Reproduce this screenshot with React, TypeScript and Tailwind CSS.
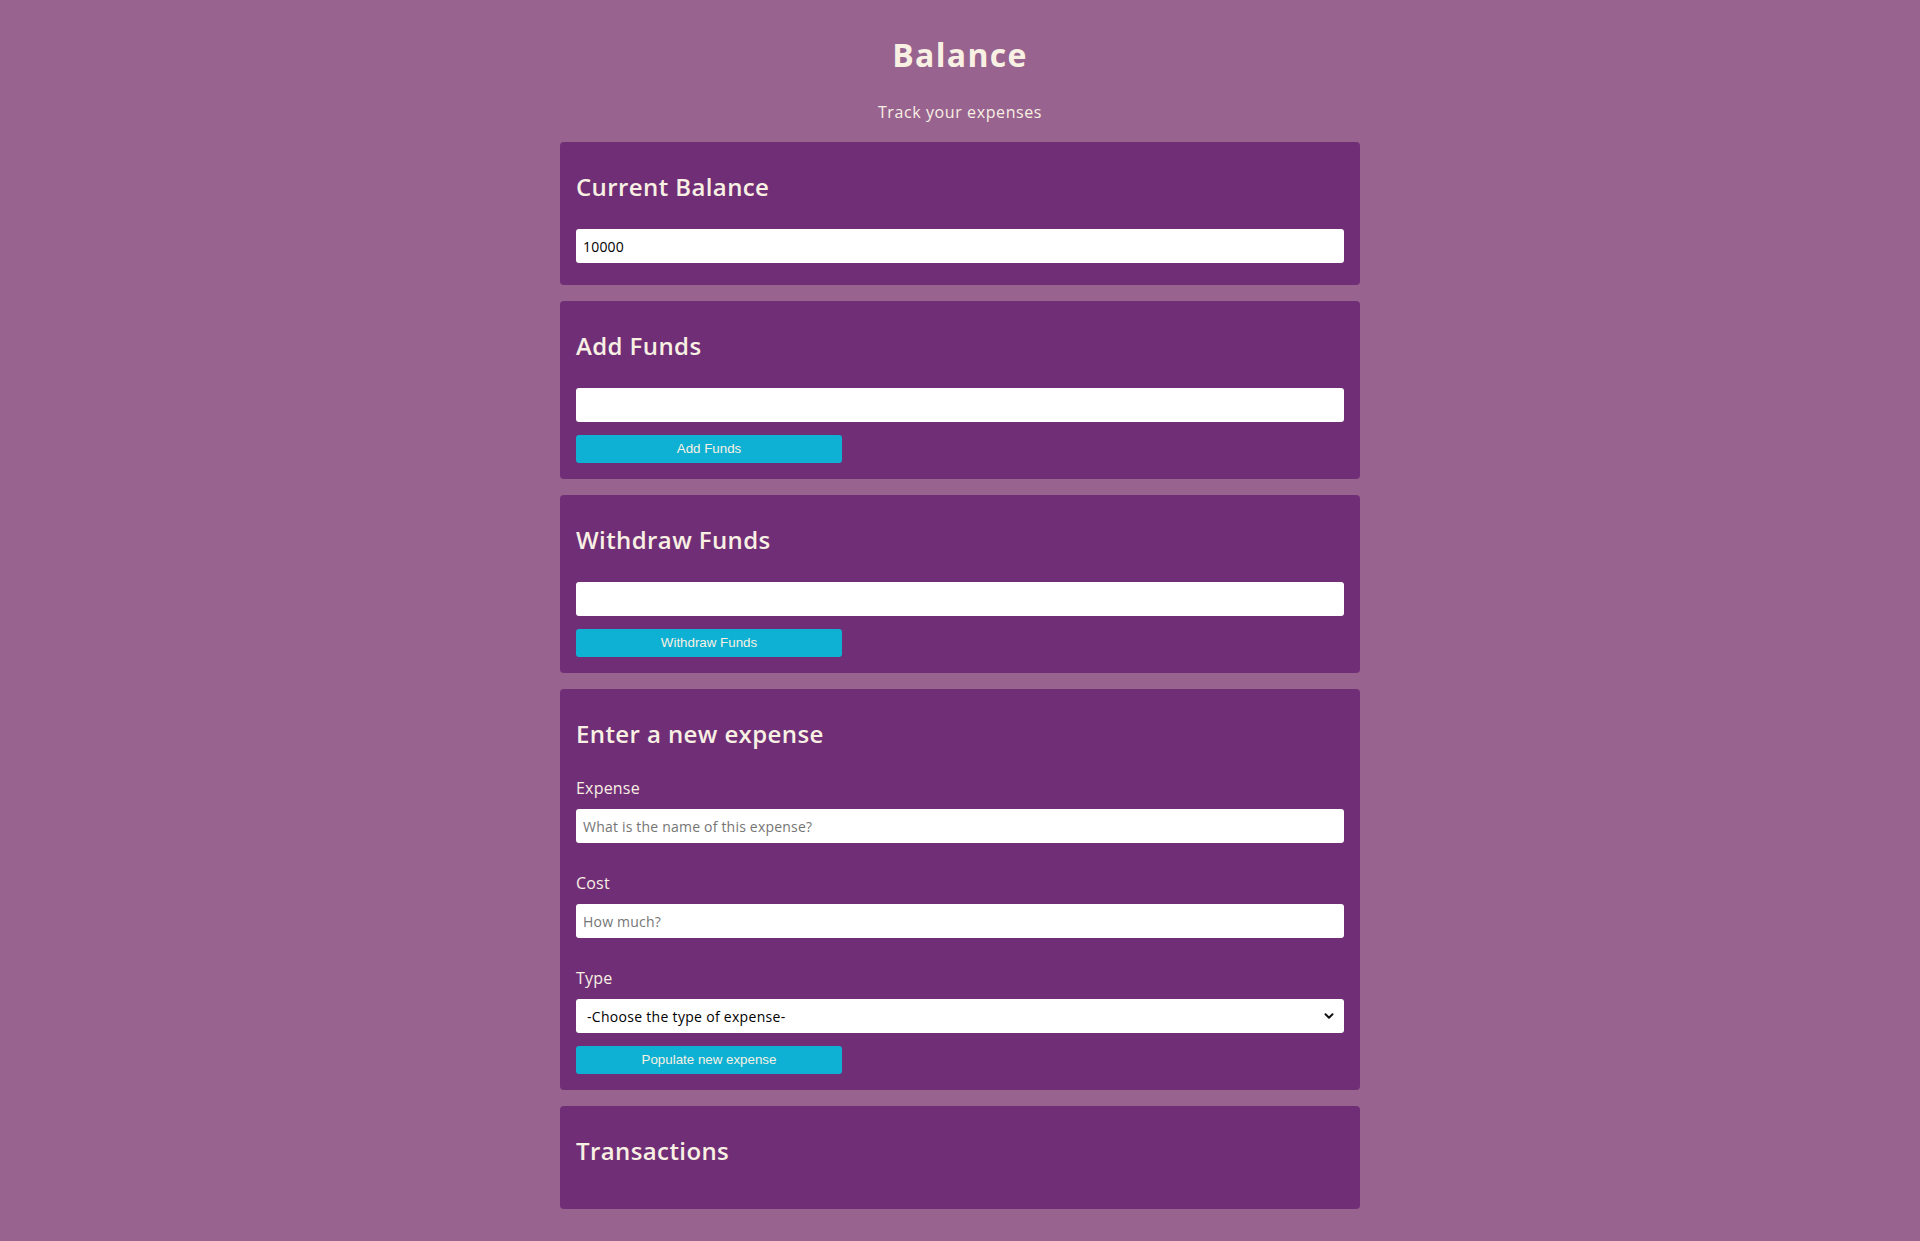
import React from "react";

function Card({ title, children, pb = "pb-4" }: { title: string; children?: React.ReactNode; pb?: string }) {
  return (
    <section className={`bg-[#702e77] rounded-[4px] px-4 pt-[27px] ${pb}`}>
      <h2 className="text-[24px] leading-[36px] font-semibold tracking-[0.4px] text-[#f8f0e3]">{title}</h2>
      {children}
    </section>
  );
}

function TextInput({ value, placeholder }: { value?: string; placeholder?: string }) {
  return (
    <input
      type="text"
      defaultValue={value}
      placeholder={placeholder}
      className="block w-full h-[34px] bg-white rounded-[3px] px-[7px] text-[14px] tracking-[0.2px] text-black placeholder:text-[#757575] outline-none"
    />
  );
}

function Btn({ children }: { children: React.ReactNode }) {
  return (
    <button className="block w-[266px] h-[28px] bg-[#0eb1d3] rounded-[3px] text-[13.33px] text-[#f8f0e3] font-['Liberation_Sans',Arial,sans-serif]">
      {children}
    </button>
  );
}

function Label({ children }: { children: React.ReactNode }) {
  return <label className="block text-[16px] leading-[24px] font-medium tracking-[0.2px] text-[#f8f0e3]">{children}</label>;
}

export default function App() {
  return (
    <div className="min-h-[1241px] bg-[#98638f] font-['Open_Sans',sans-serif] flex flex-col items-center pb-8">
      <h1 className="mt-[31px] text-[32px] leading-[48px] font-bold tracking-[1.3px] text-[#f8f0e3]">Balance</h1>
      <p className="mt-[21px] text-[16px] leading-[24px] tracking-[0.6px] text-[#f8f0e3]">Track your expenses</p>
      <main className="mt-[18px] w-[800px] flex flex-col gap-4">
        <Card title="Current Balance" pb="pb-[22px]">
          <div className="mt-[24px]">
            <TextInput value="10000" />
          </div>
        </Card>
        <Card title="Add Funds">
          <div className="mt-[24px]">
            <TextInput />
          </div>
          <div className="mt-[13px]">
            <Btn>Add Funds</Btn>
          </div>
        </Card>
        <Card title="Withdraw Funds">
          <div className="mt-[24px]">
            <TextInput />
          </div>
          <div className="mt-[13px]">
            <Btn>Withdraw Funds</Btn>
          </div>
        </Card>
        <Card title="Enter a new expense">
          <div className="mt-[24px]">
            <Label>Expense</Label>
            <div className="mt-[9px]">
              <TextInput placeholder="What is the name of this expense?" />
            </div>
          </div>
          <div className="mt-[28px]">
            <Label>Cost</Label>
            <div className="mt-[9px]">
              <TextInput placeholder="How much?" />
            </div>
          </div>
          <div className="mt-[28px]">
            <Label>Type</Label>
            <div className="mt-[9px] relative">
              <select className="block w-full h-[34px] bg-white rounded-[3px] pl-[11px] pr-8 text-[14px] tracking-[0.3px] text-black appearance-none outline-none">
                <option>-Choose the type of expense-</option>
                <option>Food</option>
                <option>Transport</option>
                <option>Entertainment</option>
              </select>
              <svg
                className="absolute right-[9px] top-1/2 -translate-y-1/2 pointer-events-none"
                width="12"
                height="12"
                viewBox="0 0 12 12"
              >
                <path d="M2.5 4.2 L6 7.7 L9.5 4.2" fill="none" stroke="#111" strokeWidth="2" strokeLinecap="round" strokeLinejoin="round" />
              </svg>
            </div>
          </div>
          <div className="mt-[13px]">
            <Btn>Populate new expense</Btn>
          </div>
        </Card>
        <Card title="Transactions" pb="pb-[40px]" />
      </main>
    </div>
  );
}
